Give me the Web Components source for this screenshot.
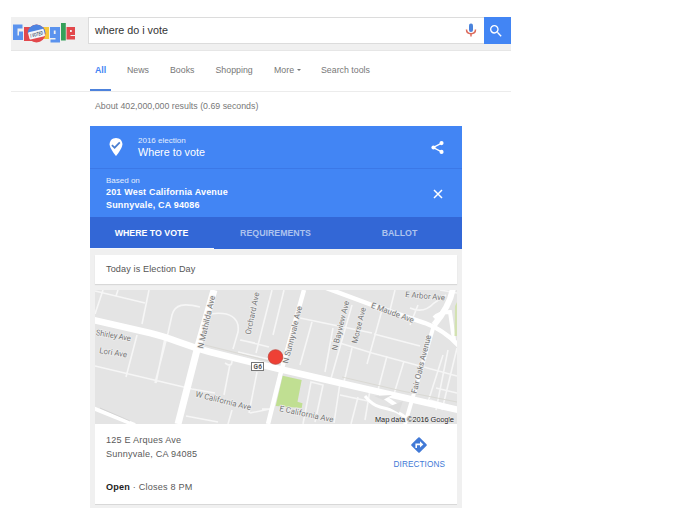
<!DOCTYPE html>
<html lang="en">
<head>
<meta charset="utf-8">
<title>where do i vote</title>
<style>
html,body{margin:0;background:#fff}
body{width:678px;height:510px;overflow:hidden;font-family:"Liberation Sans",Arial,sans-serif;font-size:8.8px;color:#777}
</style>
</head>
<body>
<vote-page></vote-page>
<script>
const define = (name, html) => {
  const t = document.createElement('template');
  t.innerHTML = html;
  customElements.define(name, class extends HTMLElement {
    constructor() {
      super();
      this.attachShadow({mode: 'open'}).append(t.content.cloneNode(true));
    }
  });
};

define('doodle-logo', `
<style>:host{display:block;width:64px;height:20px}svg{display:block}</style>
<svg width="64" height="20" viewBox="12 23 64 20">
  <path d="M13 24.500h9.500v4h-5v7h1.500v-4h4v8.500H13z" fill="#5b93ee"/>
  <path d="M24 27h9v14h-9z" fill="#e2484c"/>
  <path d="M41 27h8v12h-8z" fill="#f4c63a"/>
  <path d="M50 27h10v15.500H50.500v-3h5v-1.500H50zM53.800 30.500v3.500h1.800v-3.500z" fill="#5b93ee" fill-rule="evenodd"/>
  <path d="M61 23h4.800v17.500H61z" fill="#35a05a"/>
  <path d="M66.500 27h8.500v8h-4.500v1h4.500v3.500h-8.500zM70 30v2h1.800v-2z" fill="#e2484c" fill-rule="evenodd"/>
  <circle cx="36.500" cy="33.500" r="9" fill="#e2484c"/>
  <path d="M27.500 33.500a9 9 0 0 1 18 0z" fill="#4c84e2"/>
  <g transform="rotate(-14 36.500 34)"><rect x="28.500" y="30.500" width="16" height="7.500" rx="1" fill="#f4f6fb"/>
  <text x="30" y="36.200" font-size="5.500" font-weight="bold" font-style="italic" textLength="13" lengthAdjust="spacingAndGlyphs" fill="#44566f">I VOTED</text></g>
</svg>`);

define('search-header', `
<style>
:host{display:flex;box-sizing:border-box;height:34px;background:#f0f0f0;border-bottom:1px solid #e6e6e6}
doodle-logo{margin:6px 12px 0 1px}
.box{box-sizing:border-box;flex:1;height:27px;display:flex;align-items:center;justify-content:space-between;background:#fff;border:1px solid #dcdcdc;border-right:0;padding:0 7px 2px 6px;font-size:10.750px;color:#333}
.go{width:26.500px;height:27px;background:#4285f4;display:grid;place-items:center;padding-right:.5px}
.go svg{margin-right:2px}
svg{display:block}
.mic{margin-top:2px}
</style>
<doodle-logo></doodle-logo>
<div class="box"><span>where do i vote</span>
<svg class="mic" width="12" height="15" viewBox="0 0 12 15"><rect x="4" y="0.500" width="4" height="8.500" rx="1.900" fill="#4b83dc"/><path d="M1.500 6.500C1.500 12 10.500 12 10.500 6.500" fill="none" stroke="#dc6a5c" stroke-width="1.500"/><path d="M6 10.500v3" stroke="#dc6a5c" stroke-width="1.500"/></svg></div>
<div class="go"><svg width="16" height="16" viewBox="0 0 24 24"><path fill="#fff" d="M15.500 14h-.79l-.28-.27A6.471 6.471 0 0 0 16 9.500 6.500 6.500 0 1 0 9.500 16c1.610 0 3.090-.59 4.230-1.570l.27.28v.79l5 4.990L20.490 19l-4.990-5zm-6 0C7.010 14 5 11.990 5 9.500S7.010 5 9.500 5 14 7.010 14 9.500 11.990 14 9.500 14z"/></svg></div>`);

define('search-tabs', `
<style>
:host{display:flex;box-sizing:border-box;height:41px;border-bottom:1px solid #ececec;padding-left:79px;line-height:38px;color:#777}
span{white-space:nowrap}
.all{width:21px;text-align:center;color:#4285f4;font-weight:bold;border-bottom:2px solid #4d82dc;height:38px;margin-right:16px}
.news{width:43px}.books{width:45.500px}.shop{width:58.500px}.more{width:47px}
i{display:inline-block;border:2.500px solid transparent;border-top-color:#777;border-bottom:0;margin-left:3px;vertical-align:2px}
</style>
<span class="all">All</span><span class="news">News</span><span class="books">Books</span><span class="shop">Shopping</span><span class="more">More<i></i></span><span>Search tools</span>`);

define('election-head', `
<style>
:host{display:block;background:#4285f4;color:#fff}
.row{box-sizing:border-box;display:flex;align-items:center}
.top{height:43px;padding:0 17px 0 17px;border-bottom:1px solid #3b78e7}
.pin{margin-right:13px}
.t{flex:1}
small{display:block;font-size:8px;line-height:10px;color:#e3edfd}
.title{display:block;font-size:10.750px;line-height:13px}
.addr{height:48px;padding:1px 18px 0 16px}
.addr b{display:block;font-size:9px;line-height:13px;letter-spacing:.18px}
svg{display:block}
</style>
<div class="row top"><svg class="pin" width="18" height="20" viewBox="0 0 18 20"><path d="M9 1C5.100 1 2.600 3.900 2.600 7.300 2.600 11.600 9 19 9 19s6.400-7.400 6.400-11.700C15.400 3.900 12.900 1 9 1z" fill="#fff"/><path d="M4.900 8.200l2.700 2.500 5.200-5.400" fill="none" stroke="#4b7fd0" stroke-width="1.700"/></svg>
<div class="t"><small>2016 election</small><span class="title">Where to vote</span></div>
<svg width="15" height="15" viewBox="0 0 16 16"><path d="M13 3L3.500 8l9.500 5" fill="none" stroke="#fff" stroke-width="1.500"/><g fill="#fff"><circle cx="12.300" cy="3.300" r="2.200"/><circle cx="3.700" cy="8" r="2.200"/><circle cx="12.300" cy="12.700" r="2.200"/></g></svg></div>
<div class="row addr"><div class="t"><small>Based on</small><b>201 West California Avenue</b><b>Sunnyvale, CA 94086</b></div>
<svg width="12" height="12" viewBox="0 0 12 12"><path d="M2 2l8 8M10 2l-8 8" stroke="#fff" stroke-width="1.500"/></svg></div>`);

define('election-tabs', `
<style>
:host{display:grid;grid-template-columns:repeat(3,1fr);height:32px;background:#3367d6;color:#adc3ee;font-weight:bold;line-height:32px;text-align:center}
span{box-sizing:border-box;height:32px;padding-right:1px}
.on{color:#fff;border-bottom:1.500px solid #f5f7fc}
</style>
<span class="on">WHERE TO VOTE</span><span>REQUIREMENTS</span><span>BALLOT</span>`);

define('street-map', `
<style>:host{display:block;height:134px}svg{display:block}text{font-family:Roboto,"Liberation Sans",sans-serif;font-size:8px;fill:#777;stroke:#eee;stroke-width:1.500px;paint-order:stroke}</style>
<svg width="362" height="134" viewBox="95 290 362 134">
<rect x="95" y="290" width="362" height="134" fill="#e4e4e4"/>
<g fill="none" stroke="#f6f6f6" stroke-width="1.600">
<path d="M95 291L145 303M103 290l-8 24M118 290l-2 6M149 290L142 324M200 307C184 303 175 304 172 315L168 333M137 335L126 377M165 338L156 383M95 366L192 389M186 416L218 422M168 333L155 383M210 314C230 311 240 318 238 332L233 349M192 389L215 393M272 290L256 353M284 290L273 335M241 340l28 7M238 352l30 7M240 340l15 3M300 318L372 333M312 322L300 365M333 328L325 372M257 372L249 413M230 364L224 395M250 413l20-4M303 424l8-42 12 3-8 37M340 383l-6 40M232 410l-4 14M225 363q7 5 7-2M262 409h10"/>
<path d="M352 305L330 382M382 310L367 364M374 334L420 346M330 340L372 353L457 376M352 348L344 382M387 356L378 390M404 361L394 394M418 305l-8 20M410 308q14 6 24-5l12-8M443 355L428 402M436 388l21 5M430 400l27 8M457 348l-15 62M448 350L436 410M440 290l17 3M370 390l-5 30M358 397l-7 27M340 395l28 6M395 290l-5 20"/>
</g>
<g fill="none" stroke="#fff">
<path stroke-width="7" d="M214 290L197 350 178 424"/>
<path stroke-width="6.500" d="M93 320L150 333C175 339 180 344 210 352L275 368 340 383 375 391 410 399 459 410"/>
<path stroke-width="4.500" d="M304 290L281 372 268 424M326 288L380 308 425 323Q444 330 459 346"/>
<path stroke-width="6" d="M453 288Q450 306 434 325"/><path stroke-width="4" d="M434 325L412 400 405 424M434 318Q440 312 450 312l4 28M380 394l20 14"/>
<path stroke-width="3" d="M365 396C380 415 390 402 408 420"/>
<path stroke-width="4" d="M93 408l42 17"/>
</g>
<path d="M205 345l68 17M342 377l60 14 55 11" stroke="#d7d5cf" stroke-width=".8" fill="none"/>
<path d="M374 396l18-1-9 5zM388 407l15-6-4 12z" fill="#ddd"/>
<path d="M100 408l30 13" stroke="#ccc" stroke-width=".7"/>
<path d="M282.700 375.700L301.700 380 297.500 401.700 302.500 403.300 301.700 408 275.700 406z" fill="#c0df92"/>
<path d="M455 306l2-4v34h-2.500z" fill="#d3e2b2"/>
<text transform="translate(95.500 335) rotate(10)" textLength="35.500">Shirley Ave</text>
<text transform="translate(99 353) rotate(9)" textLength="28">Lori Ave</text>
<text transform="translate(203 349) rotate(-77)" textLength="54">N Mathilda Ave</text>
<text transform="translate(250.500 335) rotate(-78)" textLength="43">Orchard Ave</text>
<text transform="translate(288 364) rotate(-76)" textLength="59">N Sunnyvale Ave</text>
<text transform="translate(337 351) rotate(-76)" textLength="51">N Bayview Ave</text>
<text transform="translate(357 344) rotate(-76)" textLength="37">Morse Ave</text>
<text transform="translate(416.500 394) rotate(-76)" textLength="60">Fair Oaks Avenue</text>
<text transform="translate(405 297) rotate(5)" textLength="40">E Arbor Ave</text>
<text transform="translate(370.500 307.500) rotate(20)" textLength="45">E Maude Ave</text>
<text transform="translate(195 396.500) rotate(14)" textLength="57">W California Ave</text>
<text transform="translate(279 411) rotate(12)" textLength="55">E California Ave</text>
<rect x="251.500" y="362.500" width="12" height="8" fill="#fff" stroke="#777"/>
<text x="253.500" y="369" style="font-size:6.500px;font-weight:bold;stroke:none;fill:#555" textLength="8.500">G6</text>
<circle cx="275.500" cy="357" r="7.300" fill="#ee4035" stroke="#bf473f" stroke-width=".8"/>
<text x="375" y="421.500" textLength="79" style="font-family:'Liberation Sans',sans-serif;font-size:7.600px;fill:#222;stroke:#e9e9e9">Map data ©2016 Google</text>
</svg>`);

define('place-info', `
<style>
:host{box-sizing:border-box;display:flex;justify-content:space-between;height:81px;background:#fff;padding:10px 12px 0 11px;color:#5a5a5a;font-size:9.100px;line-height:13.500px;letter-spacing:.2px;border-bottom:1px solid #d8d8d8}
.hours{margin-top:19.500px}
b{color:#222}
.dir{display:flex;flex-direction:column;align-items:center;color:#4179d6;font-size:8.200px;padding-top:2px;letter-spacing:.1px}
svg{display:block;margin-bottom:4px}
</style>
<div><div>125 E Arques Ave</div><div>Sunnyvale, CA 94085</div><div class="hours"><b>Open</b> · Closes 8 PM</div></div>
<div class="dir"><svg width="18" height="18" viewBox="0 0 18 18"><rect x="3.200" y="3.200" width="11.600" height="11.600" rx="1" transform="rotate(45 9 9)" fill="#4179d6"/><path d="M6.200 12V8.400h4.500" fill="none" stroke="#fff" stroke-width="1.600"/><path d="M10 5.300l3.300 3.100-3.300 3.100z" fill="#fff"/></svg><span>DIRECTIONS</span></div>`);

define('notice-bar', `
<style>:host{display:block;height:29px;line-height:29px;background:#fff;padding-left:11px;margin-bottom:6px;color:#555;font-size:9.100px;letter-spacing:.12px;box-shadow:0 1px 1px #d8d8d8}</style>
<slot></slot>`);

define('vote-page', `
<style>
:host{display:block;width:500px;padding:17px 0 0 11px}
.stats{padding:8px 0 0 84px;line-height:12px;height:26px}
.card{width:372px;margin-left:79px}
.body{box-sizing:border-box;background:#f0f0f0;padding:6px 5px 3px;height:259px}
</style>
<search-header></search-header>
<search-tabs></search-tabs>
<div class="stats">About 402,000,000 results (0.69 seconds)</div>
<div class="card"><election-head></election-head><election-tabs></election-tabs>
<div class="body"><notice-bar>Today is Election Day</notice-bar><street-map></street-map><place-info></place-info></div></div>`);
</script>
</body>
</html>
